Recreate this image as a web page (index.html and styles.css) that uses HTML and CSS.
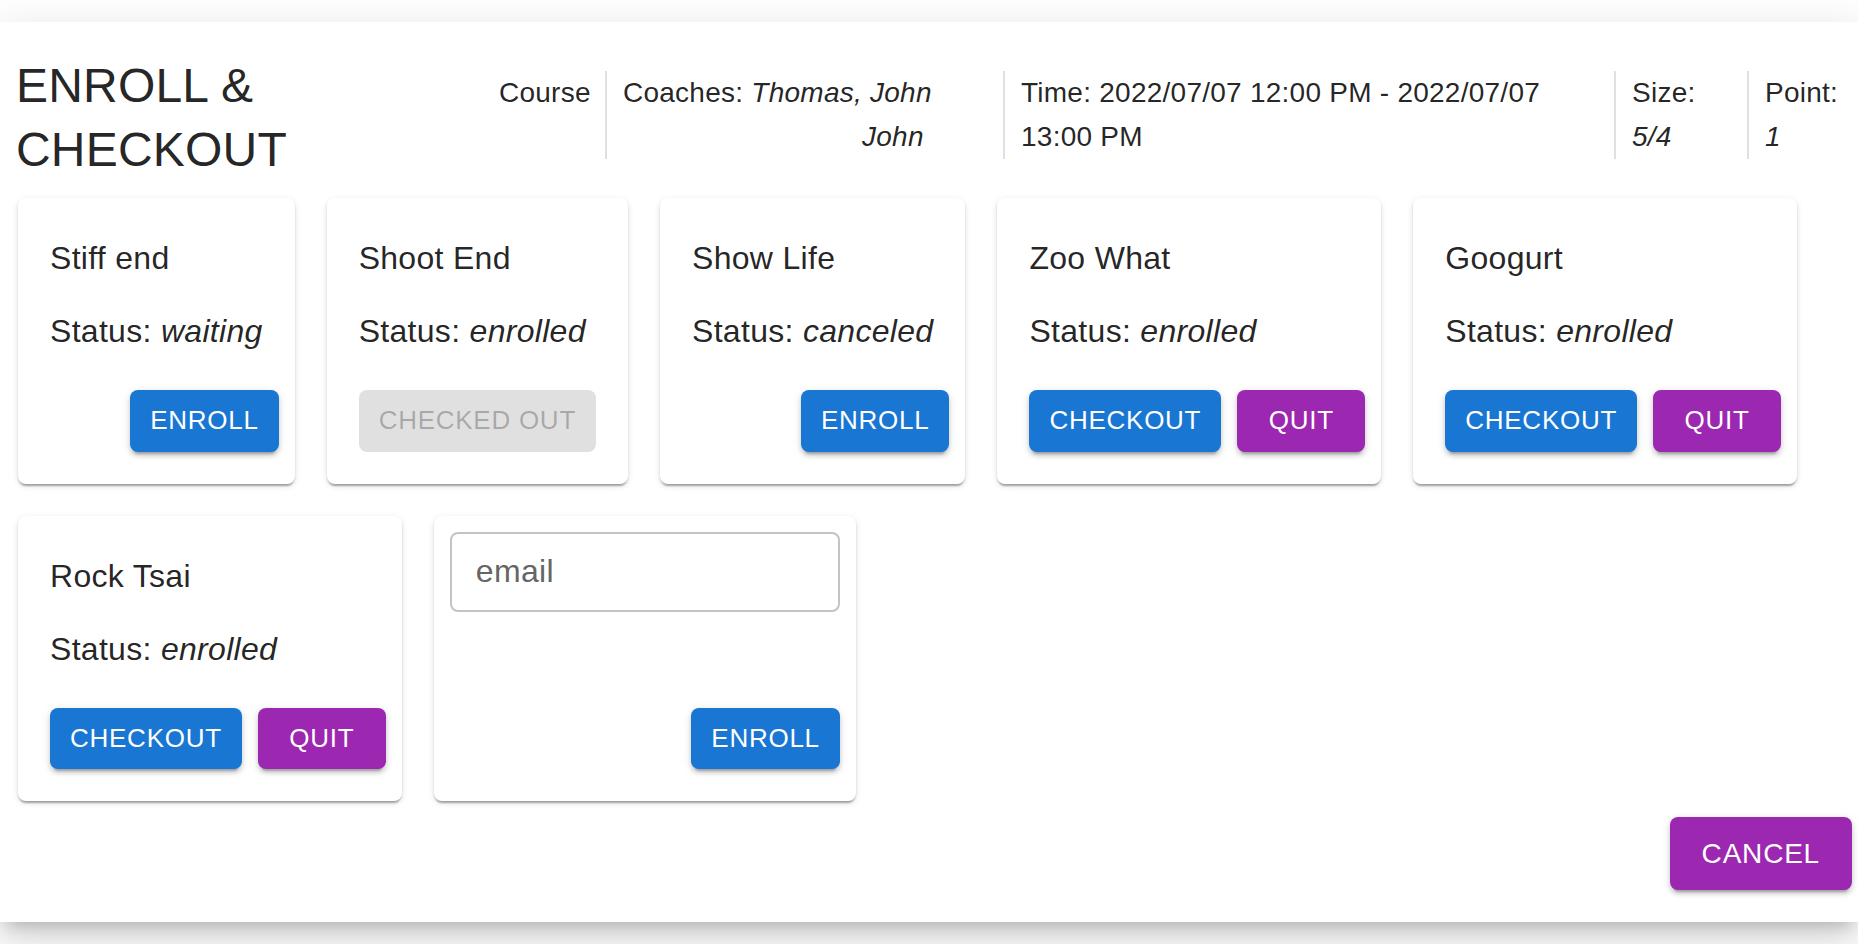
FILE: index.html
```html
<!DOCTYPE html>
<html lang="en">
<head>
<meta charset="utf-8">
<title>Enroll &amp; Checkout</title>
<link rel="stylesheet" href="styles.css">
</head>
<body>
<div class="dialog">
  <div class="dialog-header">
    <h2 class="title">ENROLL &amp; CHECKOUT</h2>
    <div class="info-group">
      <div class="info info-course">Course</div>
      <div class="divider"></div>
      <div class="info info-coaches"><div class="coach-text">Coaches: <em>Thomas, John<br>John&nbsp;</em></div></div>
      <div class="divider"></div>
      <div class="info info-time">Time: 2022/07/07 12:00 PM - 2022/07/07<br>13:00 PM</div>
      <div class="divider"></div>
      <div class="info info-size">Size:<br><em>5/4</em></div>
      <div class="divider"></div>
      <div class="info info-point">Point:<br><em>1</em></div>
    </div>
  </div>

  <div class="cards">
    <div class="card">
      <div class="card-content">
        <p class="name">Stiff end</p>
        <p class="status">Status: <em>waiting</em></p>
      </div>
      <div class="card-actions end">
        <button class="btn primary">Enroll</button>
      </div>
    </div>

    <div class="card">
      <div class="card-content">
        <p class="name">Shoot End</p>
        <p class="status">Status: <em>enrolled</em></p>
      </div>
      <div class="card-actions">
        <button class="btn disabled" disabled>Checked out</button>
      </div>
    </div>

    <div class="card">
      <div class="card-content">
        <p class="name">Show Life</p>
        <p class="status">Status: <em>canceled</em></p>
      </div>
      <div class="card-actions end">
        <button class="btn primary">Enroll</button>
      </div>
    </div>

    <div class="card">
      <div class="card-content">
        <p class="name">Zoo What</p>
        <p class="status">Status: <em>enrolled</em></p>
      </div>
      <div class="card-actions">
        <button class="btn primary">Checkout</button>
        <button class="btn secondary">Quit</button>
      </div>
    </div>

    <div class="card">
      <div class="card-content">
        <p class="name">Googurt</p>
        <p class="status">Status: <em>enrolled</em></p>
      </div>
      <div class="card-actions">
        <button class="btn primary">Checkout</button>
        <button class="btn secondary">Quit</button>
      </div>
    </div>

    <div class="card">
      <div class="card-content">
        <p class="name">Rock Tsai</p>
        <p class="status">Status: <em>enrolled</em></p>
      </div>
      <div class="card-actions">
        <button class="btn primary">Checkout</button>
        <button class="btn secondary">Quit</button>
      </div>
    </div>

    <div class="card card-email">
      <div class="card-content email-content">
        <div class="email-field"><span class="email-label">email</span></div>
      </div>
      <div class="card-actions end">
        <button class="btn primary">Enroll</button>
      </div>
    </div>
  </div>

  <div class="dialog-actions">
    <button class="btn secondary btn-large">Cancel</button>
  </div>
</div>
</body>
</html>
```

FILE: styles.css
```css
html, body {
  margin: 0;
  padding: 0;
  background: #ffffff;
  overflow: hidden;
  height: 100%;
}

body {
  font-family: "Liberation Sans", Arial, Helvetica, sans-serif;
  color: rgba(0, 0, 0, 0.87);
}

.dialog {
  margin-top: 22px;
  background: #ffffff;
  padding: 32px 6px 32px 16px;
  overflow: hidden;
  box-shadow: 0 11px 15px -7px rgba(0, 0, 0, 0.2),
              0 24px 38px 3px rgba(0, 0, 0, 0.08),
              0 9px 46px 8px rgba(0, 0, 0, 0.07);
}

.dialog-header {
  display: flex;
  align-items: flex-start;
}

.title {
  flex: none;
  width: 467px;
  margin: 0;
  font-size: 48px;
  font-weight: 400;
  line-height: 64px;
  letter-spacing: 0.2px;
}

.info-group {
  flex: none;
  display: flex;
  align-items: stretch;
  margin-top: 17px;
}

.info {
  flex: none;
  padding: 0 16px;
  font-size: 28px;
  line-height: 44px;
  letter-spacing: 0.25px;
  white-space: nowrap;
}

.info-course { width: 90px; text-align: right; }
.info-coaches { width: 364px; }
.coach-text { display: inline-block; text-align: right; }
.info-time { width: 577px; }
.info-size { width: 99px; }
.info-point { width: 80px; }

.divider {
  flex: none;
  width: 2px;
  background: #e0e0e0;
}

.cards {
  display: flex;
  flex-wrap: wrap;
  align-items: stretch;
  gap: 32px;
  margin-top: 16px;
  padding-left: 2px;
  width: 1810px;
}

.card {
  flex: none;
  display: flex;
  flex-direction: column;
  background: #ffffff;
  border-radius: 8px;
  box-shadow: 0 4px 2px -2px rgba(0, 0, 0, 0.2),
              0 2px 2px 0 rgba(0, 0, 0, 0.14),
              0 2px 6px 0 rgba(0, 0, 0, 0.12);
}

.card-content {
  padding: 32px 32px 15px;
}

.name, .status {
  margin: 0;
  font-size: 32px;
  line-height: 56px;
  letter-spacing: 0.3px;
  white-space: nowrap;
}

.name {
  margin-bottom: 17px;
}

.card-actions {
  margin-top: auto;
  display: flex;
  align-items: center;
  gap: 16px;
  padding: 16px 16px 32px;
}

.card-actions.end {
  justify-content: flex-end;
}

.card-actions .btn:first-child {
  margin-left: 16px;
}

.card-actions .btn.disabled {
  margin-right: 16px;
}

.btn {
  font-family: "Liberation Sans", Arial, Helvetica, sans-serif;
  font-size: 26px;
  font-weight: 400;
  line-height: 1.75;
  letter-spacing: 0.74px;
  text-transform: uppercase;
  padding: 8px 20px;
  min-width: 128px;
  border: none;
  border-radius: 8px;
  color: #ffffff;
  cursor: pointer;
  box-shadow: 0 6px 2px -4px rgba(0, 0, 0, 0.2),
              0 4px 4px 0 rgba(0, 0, 0, 0.14),
              0 2px 10px 0 rgba(0, 0, 0, 0.12);
}

.btn.primary { background: #1976d2; }
.btn.secondary { background: #9c27b0; }

.btn.disabled {
  background: rgba(0, 0, 0, 0.12);
  color: rgba(0, 0, 0, 0.26);
  box-shadow: none;
  cursor: default;
}

.btn-large {
  font-size: 28px;
  letter-spacing: 0.8px;
  padding: 12px 32px;
}

.email-content {
  padding: 16px;
}

.email-field {
  box-sizing: border-box;
  width: 390px;
  height: 80px;
  border: 2px solid #c4c4c4;
  border-radius: 8px;
  display: flex;
  align-items: center;
  padding: 0 24px;
}

.email-label {
  font-size: 32px;
  letter-spacing: 0.3px;
  color: #666666;
}

.dialog-actions {
  display: flex;
  justify-content: flex-end;
  padding-top: 16px;
}
```
